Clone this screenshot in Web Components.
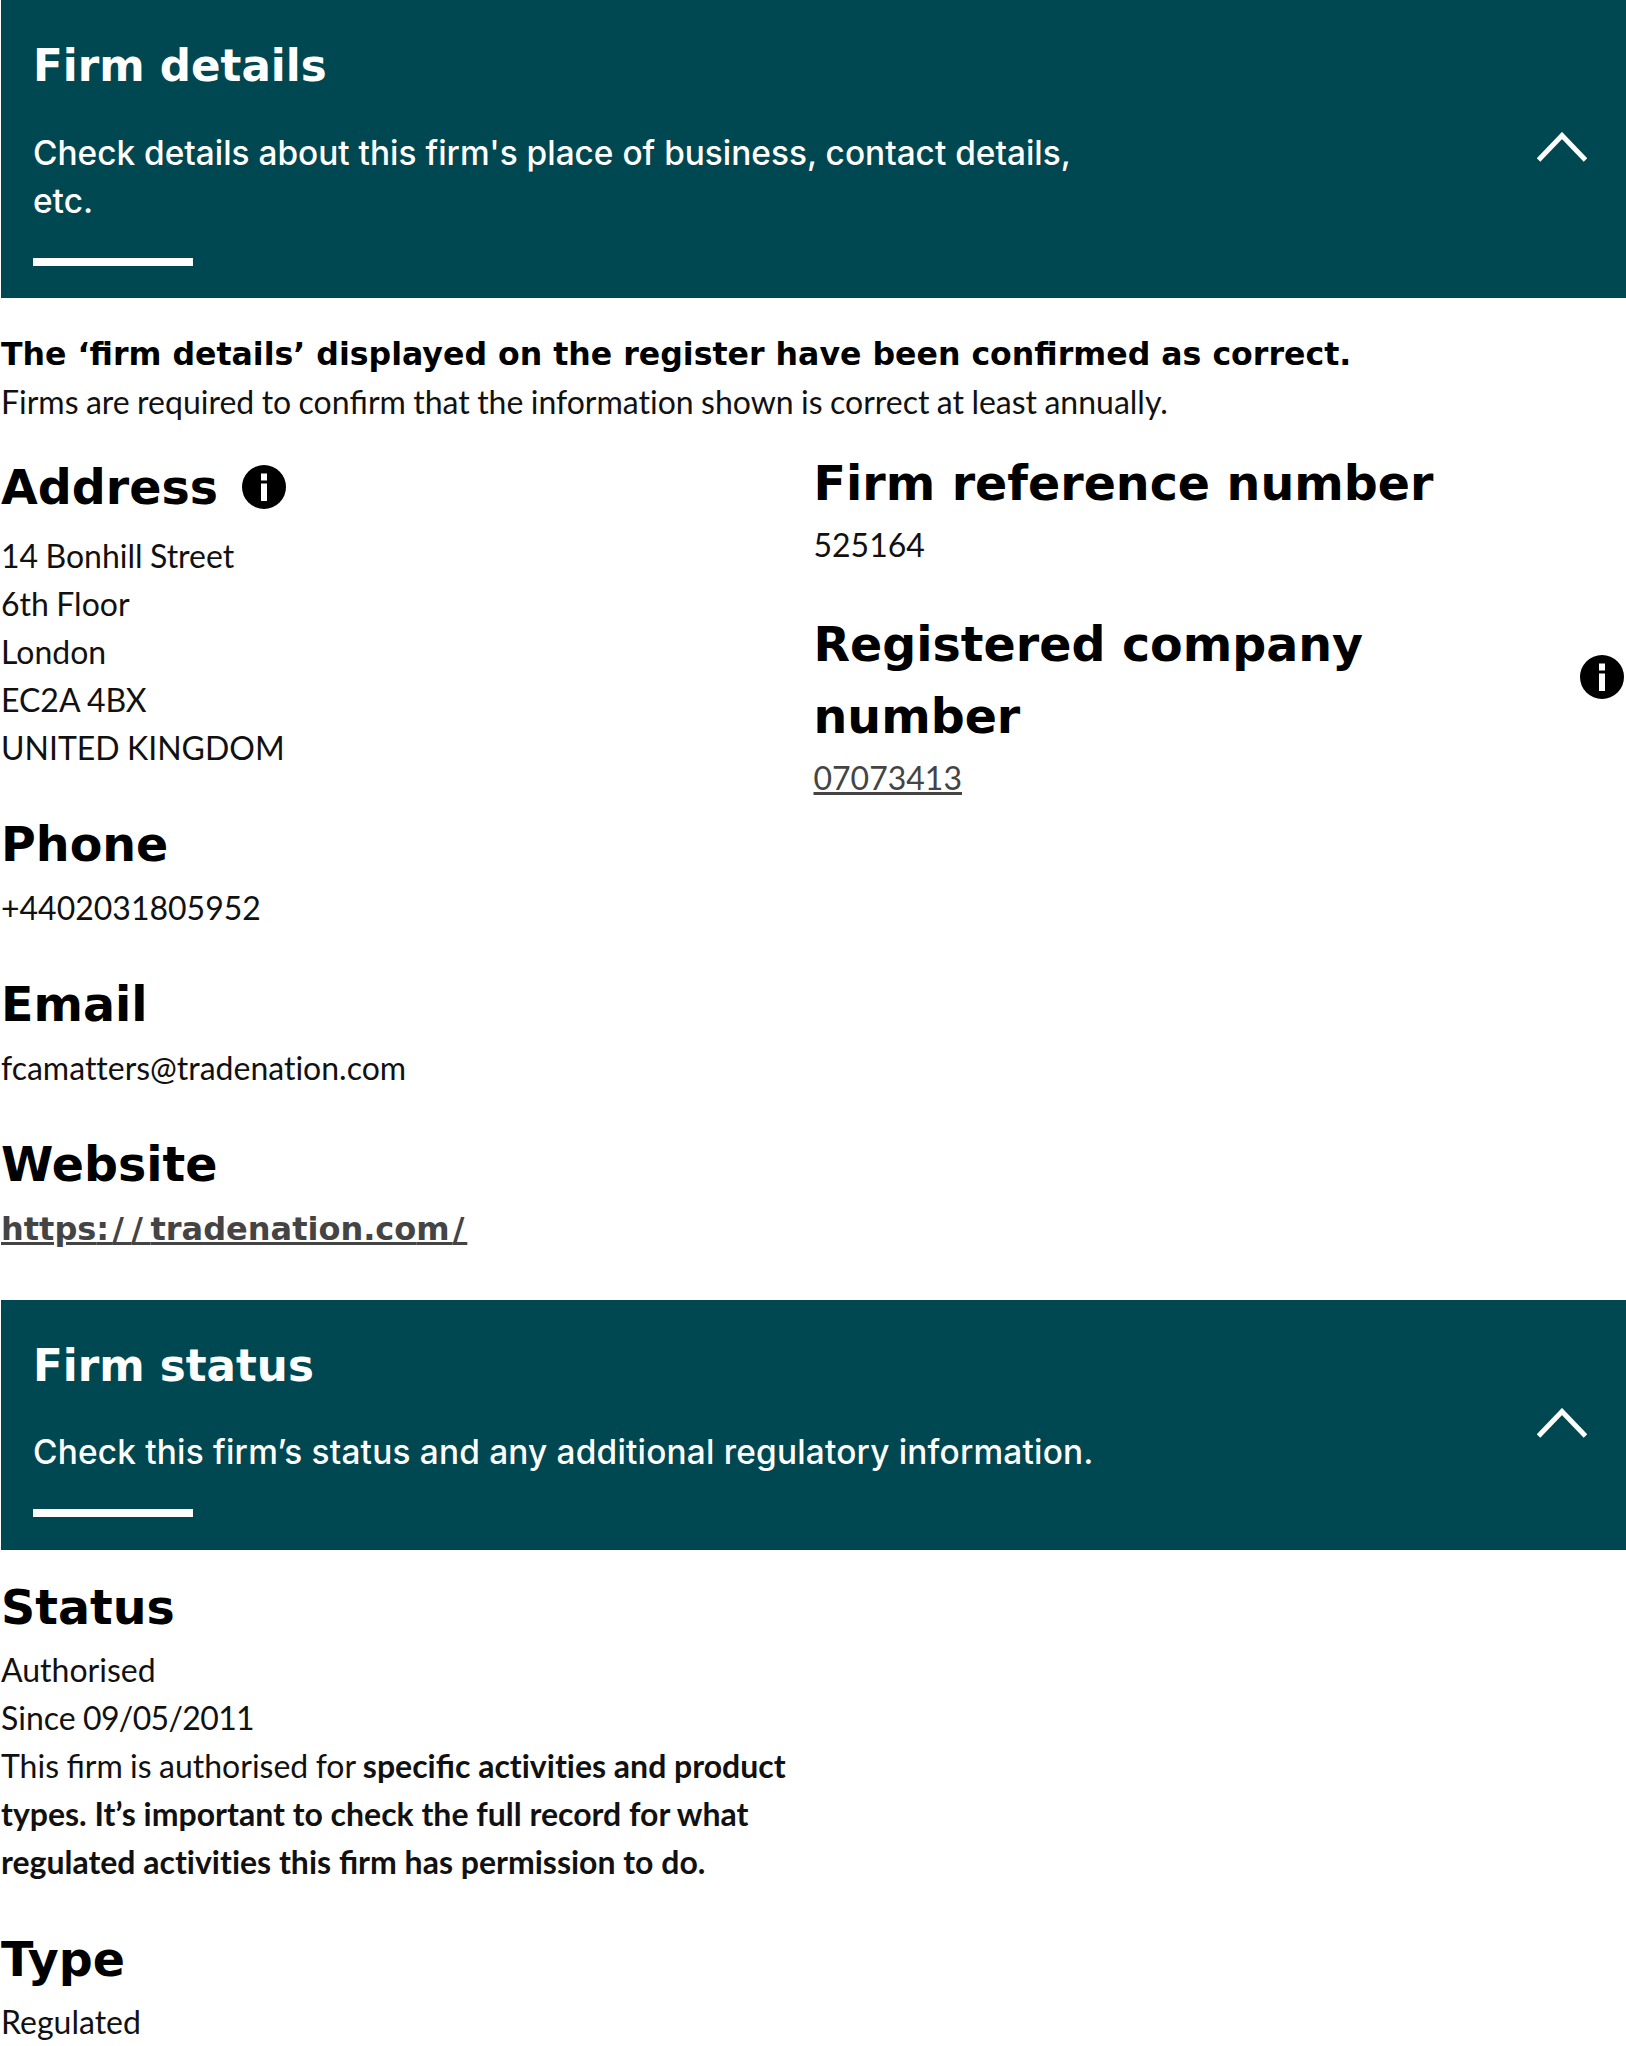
<!DOCTYPE html>
<html lang="en">
<head>
<meta charset="utf-8">
<title>Firm details</title>
<style>
  html, body { margin: 0; background: #fff; }
  body { font: 32px/48px Lato, "Liberation Sans", sans-serif; color: #111; word-spacing: -.8px; font-variant-ligatures: none; overflow-x: hidden; }
  b { word-spacing: 0; }
  .lig { font-variant-ligatures: common-ligatures; }
  .tight { letter-spacing: -.65px; }
  .s3 { letter-spacing: 3px; }
  .s7 { letter-spacing: 7.5px; }
</style>
</head>
<body>
<firm-panel>
  <panel-banner heading="Firm details">Check details about this firm's place of business, contact details, etc.</panel-banner>
  <confirm-note>
    <span slot="lead">The ‘firm details’ displayed on the register have been confirmed as correct.</span>
    Firms are required to con<span class="lig">fi</span>rm that the information shown is correct at least annually.
  </confirm-note>
  <two-columns pad-bottom="11">
    <div slot="left" style="padding-top:4px">
      <detail-field heading="Address" info="inline" gap="8">14 Bonhill Street<br>6th Floor<br>London<br>EC2A 4BX<br>UNITED KINGDOM</detail-field>
      <detail-field heading="Phone">+4402031805952</detail-field>
      <detail-field heading="Email">fcamatters@tradenation.com</detail-field>
      <detail-field heading="Website"><plain-link bold>https<span class="s3">:</span><span class="s7">/</span><span class="s7">/</span>tradenation.co<span class="s3">m</span><span class="s3">/</span></plain-link></detail-field>
    </div>
    <div slot="right">
      <detail-field heading="Firm reference number" gap="1" style="margin-bottom:39px">525164</detail-field>
      <detail-field heading="Registered company number" info="end" gap="1"><plain-link>07073413</plain-link></detail-field>
    </div>
  </two-columns>
  <panel-banner heading="Firm status" compact>Check this firm’s status and any additional regulatory information.</panel-banner>
  <two-columns pad-top="21">
    <div slot="left">
      <detail-field heading="Status" gap="2" style="margin-bottom:37px">Authorised<br>Since <span class="tight">09/05/2011</span><br>This <span class="lig">fi</span>rm is authorised for <b>speci<span class="lig">fi</span>c activities and product</b> <b>types. It’s important to check the full record for what</b> <b>regulated activities this <span class="lig">fi</span>rm has permission to do.</b></detail-field>
      <detail-field heading="Type" gap="2">Regulated</detail-field>
    </div>
  </two-columns>
</firm-panel>

<script>
const infoSvg = `<svg viewBox="0 0 44 44" width="44" height="44" aria-hidden="true"><circle cx="22" cy="22" r="22" fill="#000"/><rect x="19" y="8.5" width="6" height="7" fill="#fff"/><rect x="19" y="18.5" width="6" height="17.5" fill="#fff"/></svg>`;

class FirmPanel extends HTMLElement {
  constructor() {
    super();
    this.attachShadow({ mode: "open" });
    this.shadowRoot.innerHTML = `
      <style>
        :host { display: block; padding-left: 1px; }
      </style>
      <slot></slot>`;
  }
}

class PanelBanner extends HTMLElement {
  constructor() {
    super();
    this.attachShadow({ mode: "open" });
    this.shadowRoot.innerHTML = `
      <style>
        :host { display: flex; align-items: flex-start; box-sizing: border-box; height: 298px; padding: 37px 30px 0 32px; background: #004851; color: #fff; word-spacing: 0; }
        :host([compact]) { height: 250px; }
        .text { flex: 1; min-width: 0; }
        h2 { margin: 0 0 34px; font: 700 43.6px/58px "DejaVu Sans", Verdana, sans-serif; }
        :host([compact]) h2 { margin-bottom: 33px; }
        p { margin: 0; max-width: 1060px; font: 500 33.4px/48px Inter, "Noto Sans", sans-serif; }
        :host([compact]) p { max-width: none; letter-spacing: .2px; }
        .rule { width: 160px; height: 8px; margin-top: 33px; background: #fff; }
        svg { flex: none; align-self: center; margin: 0 9px 41px 0; }
      </style>
      <div class="text">
        <h2>${this.getAttribute("heading")}</h2>
        <p><slot></slot></p>
        <div class="rule"></div>
      </div>
      <svg viewBox="0 0 50 30" width="50" height="30" aria-hidden="true"><path d="M1.5 28 25 3.5 48.5 28" fill="none" stroke="#fff" stroke-width="5"/></svg>`;
  }
}

class ConfirmNote extends HTMLElement {
  constructor() {
    super();
    this.attachShadow({ mode: "open" });
    this.shadowRoot.innerHTML = `
      <style>
        :host { display: block; padding: 33px 0 21px; }
        .lead { font: 700 31.6px/47px "DejaVu Sans", Verdana, sans-serif; color: #000; word-spacing: 0; }
      </style>
      <div class="lead"><slot name="lead"></slot></div>
      <slot></slot>`;
  }
}

class TwoColumns extends HTMLElement {
  constructor() {
    super();
    this.attachShadow({ mode: "open" });
    const top = this.getAttribute("pad-top") || 0;
    const bottom = this.getAttribute("pad-bottom") || 0;
    this.shadowRoot.innerHTML = `
      <style>
        :host { display: grid; grid-template-columns: 1fr 1fr; padding: ${top}px 0 ${bottom}px; }
        div { min-width: 0; }
      </style>
      <div><slot name="left"></slot></div>
      <div><slot name="right"></slot></div>`;
  }
}

class DetailField extends HTMLElement {
  constructor() {
    super();
    this.attachShadow({ mode: "open" });
    const info = this.getAttribute("info");
    this.shadowRoot.innerHTML = `
      <style>
        :host { display: block; margin-bottom: 36px; }
        .head { display: flex; align-items: center; gap: 24px; padding-top: 1px; margin-bottom: ${this.getAttribute("gap") || 3}px; }
        :host([info="inline"]) svg { margin-bottom: 2px; }
        :host([info="end"]) .head { justify-content: space-between; gap: 0; }
        :host([info="end"]) svg { margin: 0 2px 8px 0; }
        h3 { margin: 0; font: 700 47.5px/72px "DejaVu Sans", Verdana, sans-serif; color: #000; word-spacing: 0; }
        svg { flex: none; }
        .body { max-width: 790px; }
      </style>
      <div class="head"><h3>${this.getAttribute("heading")}</h3>${info ? infoSvg : ""}</div>
      <div class="body"><slot></slot></div>`;
  }
}

class PlainLink extends HTMLElement {
  constructor() {
    super();
    this.attachShadow({ mode: "open" });
    this.shadowRoot.innerHTML = `
      <style>
        :host { display: inline; color: #444; }
        :host([bold]) { font: 700 32px/48px "DejaVu Sans", Verdana, sans-serif; word-spacing: 0; }
        a { color: inherit; text-decoration: underline; }
      </style>
      <a href="#"><slot></slot></a>`;
  }
}

customElements.define("firm-panel", FirmPanel);
customElements.define("panel-banner", PanelBanner);
customElements.define("confirm-note", ConfirmNote);
customElements.define("two-columns", TwoColumns);
customElements.define("detail-field", DetailField);
customElements.define("plain-link", PlainLink);
</script>
</body>
</html>
